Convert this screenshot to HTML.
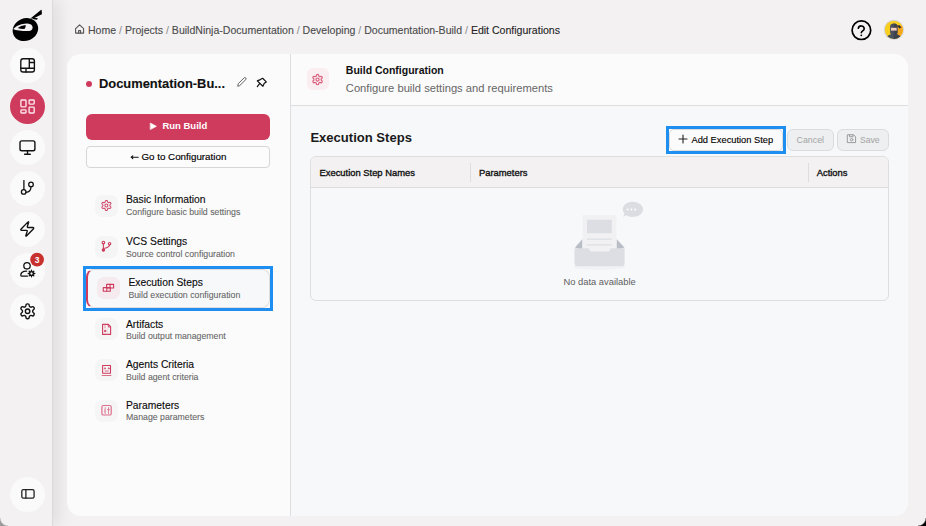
<!DOCTYPE html>
<html><head><meta charset="utf-8">
<style>
*{margin:0;padding:0;box-sizing:border-box}
html,body{width:926px;height:526px;overflow:hidden;background:#f3f1f2;font-family:"Liberation Sans",sans-serif}
.a{position:absolute;white-space:nowrap}
#side{position:absolute;left:0;top:0;width:53px;height:526px;background:#f3f1f2;border-right:1px solid #dcdadb;box-shadow:7px 0 14px rgba(0,0,0,0.075)}
.circ{position:absolute;left:10px;width:35px;height:35px;border-radius:50%;background:#fafafa}
#card{position:absolute;left:67px;top:54px;width:841px;height:462px;border-radius:14px;background:#fbfbfb;overflow:hidden}
#lp{position:absolute;left:0;top:0;width:224px;height:462px;border-right:1px solid #dedede}
#rh{position:absolute;left:224px;top:0;width:617px;height:52px;border-bottom:1px solid #dedede;background:#fbfbfb}
#rc{position:absolute;left:224px;top:52px;width:617px;height:410px;background:#f7f8fa}
.t{color:#0a0a0a;-webkit-text-stroke:0.12px #0a0a0a}
.s{color:#666;-webkit-text-stroke:0.08px #666}
.sl{color:#888;-webkit-text-stroke:0}
.ib{position:absolute;left:95px;width:23px;height:22px;border-radius:7px;background:#f5f5f6}
</style></head><body>
<div id="side">
  <div class="circ" style="top:48px"></div>
  <div class="circ" style="top:89px;background:#cf3b5d"></div>
  <div class="circ" style="top:130px"></div>
  <div class="circ" style="top:171px"></div>
  <div class="circ" style="top:212px"></div>
  <div class="circ" style="top:253px"></div>
  <div class="circ" style="top:294px"></div>
  <div class="circ" style="top:477px"></div>
</div>

<!-- breadcrumb -->
<div class="a" style="left:88px;top:25px;font-size:10.55px;line-height:10.55px;color:#4a4a4a;-webkit-text-stroke:0.1px #4a4a4a">Home<span class="sl"> / </span>Projects<span class="sl"> / </span>BuildNinja-Documentation<span class="sl"> / </span>Developing<span class="sl"> / </span>Documentation-Build<span class="sl"> / </span><span style="color:#222;-webkit-text-stroke:0.1px #222">Edit Configurations</span></div>

<div id="card">
  <div id="lp"></div>
  <div id="rh"></div>
  <div id="rc"></div>
</div>

<!-- left panel content (page coords) -->
<div class="a" style="left:86px;top:81px;width:6px;height:6px;border-radius:50%;background:#cf3b5d"></div>
<div class="a t" style="left:99px;top:78px;font-size:12.9px;line-height:12.9px;font-weight:bold;color:#111">Documentation-Bu...</div>

<div class="a" style="left:86px;top:114px;width:184px;height:26px;border-radius:6px;background:#cf3b5d"></div>
<div class="a" style="left:162.4px;top:121px;font-size:9.5px;line-height:9.5px;font-weight:bold;color:#fff">Run Build</div>

<div class="a" style="left:86px;top:146px;width:184px;height:22px;border-radius:4px;border:1px solid #d6d6d6;background:#fcfcfc"></div>
<div class="a" style="left:141.4px;top:152px;font-size:9.8px;line-height:9.8px;color:#000;-webkit-text-stroke:0.15px #000">Go to Configuration</div>

<!-- nav items -->
<div class="ib" style="top:195px"></div>
<div class="a t" style="left:126px;top:195px;font-size:10.3px;line-height:10.3px">Basic Information</div>
<div class="a s" style="left:126px;top:208px;font-size:8.76px;line-height:8.76px">Configure basic build settings</div>

<div class="ib" style="top:236px"></div>
<div class="a t" style="left:126px;top:237px;font-size:10.3px;line-height:10.3px">VCS Settings</div>
<div class="a s" style="left:126px;top:250px;font-size:8.76px;line-height:8.76px">Source control configuration</div>

<div class="a" style="left:83px;top:266px;width:190px;height:45px;border:3px solid #1e8ff0"></div>
<div class="a" style="left:86px;top:269px;width:184px;height:39px;border-radius:8px;border:1px solid #e2ddd9;border-left:2px solid #cf3b5d;background:#f7f8fa"></div>
<div class="ib" style="top:277px;left:97px;background:#f5eaed"></div>
<div class="a t" style="left:128.4px;top:278px;font-size:10.3px;line-height:10.3px">Execution Steps</div>
<div class="a s" style="left:128.4px;top:291px;font-size:8.76px;line-height:8.76px">Build execution configuration</div>

<div class="ib" style="top:318px"></div>
<div class="a t" style="left:126px;top:320px;font-size:10.3px;line-height:10.3px">Artifacts</div>
<div class="a s" style="left:126px;top:332px;font-size:8.76px;line-height:8.76px">Build output management</div>

<div class="ib" style="top:359px"></div>
<div class="a t" style="left:126px;top:360px;font-size:10.3px;line-height:10.3px">Agents Criteria</div>
<div class="a s" style="left:126px;top:373px;font-size:8.76px;line-height:8.76px">Build agent criteria</div>

<div class="ib" style="top:400px"></div>
<div class="a t" style="left:126px;top:401px;font-size:10.3px;line-height:10.3px">Parameters</div>
<div class="a s" style="left:126px;top:413px;font-size:8.76px;line-height:8.76px">Manage parameters</div>

<!-- right header -->
<div class="a" style="left:307px;top:68px;width:22px;height:22px;border-radius:6px;background:#fbeef1"></div>
<div class="a" style="left:345.8px;top:65px;font-size:10.5px;line-height:10.5px;font-weight:bold;color:#111">Build Configuration</div>
<div class="a" style="left:345.8px;top:83px;font-size:11.2px;line-height:11.2px;color:#666">Configure build settings and requirements</div>

<div class="a" style="left:310.4px;top:131px;font-size:13.05px;line-height:13.05px;font-weight:bold;color:#1a1a1a">Execution Steps</div>

<!-- buttons -->
<div class="a" style="left:666px;top:126px;width:120px;height:28px;border:3px solid #1e8ff0"></div>
<div class="a" style="left:669px;top:129px;width:114px;height:22px;border-radius:5px;border:1px solid #dcdcdc;background:#fbfbfb"></div>
<div class="a" style="left:691.5px;top:136px;font-size:9.3px;line-height:9.3px;color:#000;-webkit-text-stroke:0.12px #000">Add Execution Step</div>
<div class="a" style="left:787px;top:129px;width:46.5px;height:21.5px;border-radius:6px;border:1px solid #dcdcdc;background:#eeeff1"></div>
<div class="a" style="left:796.6px;top:136px;font-size:8.8px;line-height:8.8px;color:#a3a3a3">Cancel</div>
<div class="a" style="left:837.3px;top:129px;width:51.5px;height:21.5px;border-radius:6px;border:1px solid #dcdcdc;background:#eeeff1"></div>
<div class="a" style="left:859.9px;top:136px;font-size:8.7px;line-height:8.7px;color:#a3a3a3">Save</div>

<!-- table -->
<div class="a" style="left:310px;top:156px;width:579px;height:145px;border-radius:6px;border:1px solid #dedede;background:#f7f8fa;overflow:hidden">
  <div style="position:absolute;left:0;top:0;width:577px;height:31px;background:#f3f1f2;border-bottom:1px solid #dcdcdc"></div>
  <div style="position:absolute;left:159px;top:6px;width:1px;height:19px;background:#dedede"></div>
  <div style="position:absolute;left:497px;top:6px;width:1px;height:19px;background:#dedede"></div>
</div>
<div class="a" style="left:319.5px;top:168px;font-size:9.4px;line-height:9.4px;color:#111;-webkit-text-stroke:0.35px #111">Execution Step Names</div>
<div class="a" style="left:479px;top:168px;font-size:9.4px;line-height:9.4px;color:#111;-webkit-text-stroke:0.35px #111">Parameters</div>
<div class="a" style="left:816.7px;top:168px;font-size:9.4px;line-height:9.4px;color:#111;-webkit-text-stroke:0.35px #111">Actions</div>

<div class="a" style="left:563.4px;top:277px;font-size:9.4px;line-height:9.4px;color:#5e5e5e">No data available</div>


<svg class="a" style="left:0;top:0" width="926" height="526" viewBox="0 0 926 526" fill="none" stroke-linecap="round" stroke-linejoin="round">
 <!-- logo -->
 <g transform="translate(8,4)">
  <path d="M22.4 14.6 L32.9 5.9 Q33.6 5.6 33.7 6.4 L33.9 9.9 Q33.9 10.5 33.3 10.6 L25.4 14.6 Z" fill="#000"/>
  <path d="M24.3 13.6 L29.8 14.2 L29 15.8 L25.6 15.2 Z" fill="#000"/>
  <ellipse cx="17.4" cy="25.6" rx="13" ry="11.2" transform="rotate(-22 17.4 25.6)" fill="#000"/>
  <path d="M5.1 25.1 Q8.6 21.2 13.4 20.2 Q18 19.4 20.8 19.7 Q24.6 20.4 24.6 23.6 Q24.4 26.9 20.8 27.1 Q16 27.2 11 26.6 Q7 26.1 5.1 25.1 Z" fill="#f3f1f2"/>
  <path d="M9.7 24 Q12.6 21.6 17.7 21.1 Q17.8 23.4 16.8 24.8 Q13.4 25.2 9.7 24 Z" fill="#000"/>
 </g>
 <!-- sidebar icon 1 layout -->
 <g stroke="#111" stroke-width="1.35">
  <rect x="20.8" y="58.7" width="13.6" height="13.3" rx="2.3"/>
  <path d="M29.3 58.7V68.2M29.3 62.5H34.4M20.8 68.2H34.4M26 68.2V72"/>
 </g>
 <!-- icon 2 dashboard (white) -->
 <g stroke="#fde9ee" stroke-width="1.35">
  <rect x="20.9" y="100" width="5.1" height="6.8" rx="0.8"/>
  <rect x="29.1" y="100" width="5.1" height="4.1" rx="0.8"/>
  <rect x="29.1" y="107.1" width="5.1" height="5.9" rx="0.8"/>
  <rect x="20.9" y="109.9" width="5.1" height="3.1" rx="0.8"/>
 </g>
 <!-- monitor -->
 <g stroke="#111" stroke-width="1.4">
  <rect x="20" y="140.9" width="14.9" height="9.9" rx="1.8"/>
  <path d="M27.5 150.8V154.3M24.6 154.3H30.3"/>
 </g>
 <!-- git -->
 <g stroke="#111" stroke-width="1.3">
  <path d="M23.9 180.6V189.4"/>
  <circle cx="23.7" cy="191.9" r="2.3"/>
  <circle cx="31" cy="184.4" r="2.3"/>
  <path d="M31 186.7 Q31 192 26 192.4"/>
 </g>
 <!-- zap -->
 <g transform="translate(18.6,220.3) scale(0.72)" stroke="#111" stroke-width="1.9">
  <path d="M4 14a1 1 0 0 1-.78-1.63l9.9-10.2a.5.5 0 0 1 .86.46l-1.92 6.02A1 1 0 0 0 13 10h7a1 1 0 0 1 .78 1.63l-9.9 10.2a.5.5 0 0 1-.86-.46l1.92-6.02A1 1 0 0 0 11 14z"/>
 </g>
 <!-- user cog -->
 <g stroke="#111" stroke-width="1.3">
  <circle cx="27" cy="265.8" r="3.2"/>
  <path d="M26.6 271.2 Q23.4 271.2 21.9 272.5 Q20.8 273.5 20.8 274.9 Q20.8 276.1 22 276.1 H27.4"/>
 </g>
 <g transform="translate(31.5,273.5)" stroke="#111" stroke-width="1.3">
  <circle r="1.9"/>
  <path d="M0 -3.3V-1.9M0 1.9V3.3M-3.3 0H-1.9M1.9 0H3.3M-2.3 -2.3L-1.35 -1.35M1.35 1.35L2.3 2.3M2.3 -2.3L1.35 -1.35M-1.35 1.35L-2.3 2.3"/>
 </g>
 <circle cx="37.1" cy="259.6" r="6.9" fill="#c8302e"/>
 <text x="37.1" y="262.6" font-family="Liberation Sans" font-weight="bold" font-size="8.5" fill="#fff" text-anchor="middle">3</text>
 <!-- settings -->
 <g transform="translate(18.7,302.4) scale(0.74)" stroke="#111" stroke-width="1.9">
  <path d="M12.22 2h-.44a2 2 0 0 0-2 2v.18a2 2 0 0 1-1 1.73l-.43.25a2 2 0 0 1-2 0l-.15-.08a2 2 0 0 0-2.73.73l-.22.38a2 2 0 0 0 .73 2.730l.15.1a2 2 0 0 1 1 1.72v.51a2 2 0 0 1-1 1.74l-.15.09a2 2 0 0 0-.73 2.73l.22.38a2 2 0 0 0 2.73.73l.15-.08a2 2 0 0 1 2 0l.43.25a2 2 0 0 1 1 1.73V20a2 2 0 0 0 2 2h.44a2 2 0 0 0 2-2v-.18a2 2 0 0 1 1-1.73l.43-.25a2 2 0 0 1 2 0l.15.08a2 2 0 0 0 2.73-.73l.22-.39a2 2 0 0 0-.73-2.73l-.15-.08a2 2 0 0 1-1-1.740v-.5a2 2 0 0 1 1-1.74l.15-.09a2 2 0 0 0 .73-2.73l-.22-.38a2 2 0 0 0-2.73-.73l-.15.08a2 2 0 0 1-2 0l-.43-.25a2 2 0 0 1-1-1.73V4a2 2 0 0 0-2-2z"/>
  <circle cx="12" cy="12" r="3"/>
 </g>
 <!-- panel left -->
 <g stroke="#222" stroke-width="1.3">
  <rect x="21.8" y="489.7" width="12.3" height="8.5" rx="1.6"/>
  <path d="M25.9 489.7V498.2"/>
 </g>
 <!-- home -->
 <g stroke="#555" stroke-width="1.1">
  <path d="M75.6 28.6 L79.6 24.8 L83.6 28.6 V33.1 H75.6 Z"/>
  <path d="M78.6 33.1V30.6H80.6V33.1"/>
 </g>
 <!-- help -->
 <circle cx="861.4" cy="30.2" r="9.3" stroke="#000" stroke-width="1.7"/>
 <path d="M858.3 28.2a3 3 0 0 1 5.9.5c0 2-2.9 2.2-2.9 4" stroke="#000" stroke-width="1.6"/>
 <circle cx="861.3" cy="35.3" r="0.9" fill="#000"/>
 <!-- avatar -->
 <circle cx="893.9" cy="29.8" r="10.1" fill="#d3d4d8"/>
 <clipPath id="av"><circle cx="893.9" cy="29.8" r="9.1"/></clipPath>
 <g clip-path="url(#av)">
  <rect x="884" y="19" width="20" height="22" fill="#f8cf1e"/>
  <path d="M896 25 Q901 25 904 27 V41 H896 Z" fill="#f6a81c"/>
  <path d="M890.1 26.6 Q890.1 23.6 893.8 23.6 Q897.5 23.6 897.5 26.6 V32.4 Q897.5 33.6 896.6 34.2 Q899.6 35 900.6 37 L901.2 41 H886.4 L887 37 Q888 35 891 34.2 Q890.1 33.6 890.1 32.4 Z" fill="#4b505d"/>
  <path d="M893.8 23.6 Q897.5 23.6 897.5 26.6 V32.4 Q897.5 33.6 896.6 34.2 Q899.6 35 900.6 37 L901.2 41 H893.8 Z" fill="#3e424d"/>
  <rect x="891" y="27.8" width="5.7" height="2.8" fill="#f6cbb9"/>
  <path d="M897.2 25.4 L899.6 25.2 L901.4 27.4 L899.2 28.4 Z" fill="#2c2f37"/>
 </g>
 <!-- pencil -->
 <path d="M237.8 85.9 L238.3 83.6 L244.2 77.8 Q245 77.2 245.8 78 Q246.5 78.8 245.8 79.6 L239.9 85.4 Z" stroke="#555" stroke-width="0.9"/>
 <!-- pin -->
 <path d="M262.6 78.3 L266.3 81.9 L264.3 83.3 L262.9 86.3 L257.3 80.9 L260.3 79.6 Z" stroke="#111" stroke-width="1.2"/>
 <path d="M259.6 83.7 L257.3 86.6" stroke="#111" stroke-width="1.2"/>
 <!-- run build play -->
 <path d="M150.6 123.3 L156.3 126.3 L150.6 129.3 Z" fill="#fff" stroke="#fff" stroke-width="0.8"/>
 <!-- go to arrow -->
 <path d="M131.2 157.2 H138.2 M132.8 155.8 L131.2 157.2 L132.8 158.6" stroke="#111" stroke-width="1.1"/>
 <!-- nav icons -->
 <g transform="translate(100.4,199.4) scale(0.5)" stroke="#d04a6a" stroke-width="2.1">
  <path d="M12.22 2h-.44a2 2 0 0 0-2 2v.18a2 2 0 0 1-1 1.73l-.43.25a2 2 0 0 1-2 0l-.15-.08a2 2 0 0 0-2.73.73l-.22.38a2 2 0 0 0 .73 2.730l.15.1a2 2 0 0 1 1 1.72v.51a2 2 0 0 1-1 1.74l-.15.09a2 2 0 0 0-.73 2.73l.22.38a2 2 0 0 0 2.73.73l.15-.08a2 2 0 0 1 2 0l.43.25a2 2 0 0 1 1 1.73V20a2 2 0 0 0 2 2h.44a2 2 0 0 0 2-2v-.18a2 2 0 0 1 1-1.73l.43-.25a2 2 0 0 1 2 0l.15.08a2 2 0 0 0 2.73-.73l.22-.39a2 2 0 0 0-.73-2.73l-.15-.08a2 2 0 0 1-1-1.740v-.5a2 2 0 0 1 1-1.74l.15-.09a2 2 0 0 0 .73-2.73l-.22-.38a2 2 0 0 0-2.73-.73l-.15.08a2 2 0 0 1-2 0l-.43-.25a2 2 0 0 1-1-1.73V4a2 2 0 0 0-2-2z"/>
  <circle cx="12" cy="12" r="3"/>
 </g>
 <g stroke="#cf3b5d" stroke-width="1.1">
  <circle cx="103.4" cy="242.6" r="1.3"/>
  <path d="M103.4 243.9V249"/>
  <circle cx="103.4" cy="250" r="1.2" fill="#cf3b5d"/>
  <circle cx="109.6" cy="243.7" r="1.2"/>
  <path d="M109.6 244.9 Q109.3 247.3 104.6 248.3"/>
 </g>
 <g stroke="#cf3b5d" stroke-width="1.1">
  <rect x="106.6" y="284.4" width="7" height="3.6"/>
  <path d="M110.1 284.4V288"/>
  <rect x="103.3" y="287.6" width="7" height="3.6"/>
  <path d="M106.8 287.6V291.2"/>
 </g>
 <g stroke="#cf3b5d" stroke-width="1.1">
  <path d="M102.6 324.4H108.3L110.6 326.7V334.4H102.6Z"/>
  <path d="M108.3 324.4V327H110.6" stroke-width="0.9"/>
  <path d="M105 324.8V325.9M105 327V328" stroke-width="0.9" stroke="#e07a93"/>
  <ellipse cx="105.1" cy="331" rx="0.8" ry="1.1" fill="#cf3b5d" stroke-width="0.5"/>
  <path d="M107.3 328V334" stroke-width="0.6" stroke="#f0c4cf"/>
 </g>
 <g stroke="#cf3b5d" stroke-width="1.05">
  <rect x="102.6" y="365.4" width="7.9" height="7.8"/>
  <path d="M102.2 375.5H111" stroke-width="0.9" stroke="#d9607c"/>
  <path d="M105.1 367.8L105.8 368.9H104.4Z M109 367.8L109.7 368.9H108.3Z" stroke-width="0.5" fill="#cf3b5d"/>
  <rect x="104.6" y="370.2" width="4.2" height="1.5" rx="0.6" stroke="none" fill="#e597aa"/>
 </g>
 <g stroke="#de6f8a" stroke-width="1.2">
  <rect x="101.9" y="405.5" width="9.3" height="9.5" rx="1.6"/>
  <path d="M105.2 407.6V409.6M105.2 412.2V413.6M108.5 407.6V408.6M108.5 410.6V413.6" stroke-width="0.8"/>
  <path d="M104.4 410.1L105.8 411L104.4 411.9" stroke-width="0.9"/>
  <circle cx="108.5" cy="409.6" r="0.9" fill="#de6f8a" stroke-width="0.4"/>
 </g>
 <!-- right header gear -->
 <g transform="translate(311.3,73.3) scale(0.52)" stroke="#d9607c" stroke-width="2.3">
  <path d="M12.22 2h-.44a2 2 0 0 0-2 2v.18a2 2 0 0 1-1 1.73l-.43.25a2 2 0 0 1-2 0l-.15-.08a2 2 0 0 0-2.73.73l-.22.38a2 2 0 0 0 .73 2.730l.15.1a2 2 0 0 1 1 1.72v.51a2 2 0 0 1-1 1.74l-.15.09a2 2 0 0 0-.73 2.73l.22.38a2 2 0 0 0 2.73.73l.15-.08a2 2 0 0 1 2 0l.43.25a2 2 0 0 1 1 1.73V20a2 2 0 0 0 2 2h.44a2 2 0 0 0 2-2v-.18a2 2 0 0 1 1-1.73l.43-.25a2 2 0 0 1 2 0l.15.08a2 2 0 0 0 2.73-.73l.22-.39a2 2 0 0 0-.73-2.73l-.15-.08a2 2 0 0 1-1-1.740v-.5a2 2 0 0 1 1-1.74l.15-.09a2 2 0 0 0 .73-2.73l-.22-.38a2 2 0 0 0-2.73-.73l-.15.08a2 2 0 0 1-2 0l-.43-.25a2 2 0 0 1-1-1.73V4a2 2 0 0 0-2-2z"/>
  <circle cx="12" cy="12" r="3"/>
 </g>
 <!-- plus -->
 <path d="M683 135V143M679 139H687" stroke="#222" stroke-width="1.1"/>
 <!-- save icon -->
 <g stroke="#9a9a9a" stroke-width="1">
  <path d="M847.7 134.8H853.6L855.6 136.8V142.6H847.7Z"/>
  <path d="M849.6 134.8V136.8H853V134.8"/>
  <circle cx="851.6" cy="139.7" r="1.2"/>
 </g>
 <!-- empty illustration -->
 <ellipse cx="599.5" cy="267" rx="26" ry="3" fill="#f1f2f5"/>
 <path d="M575 247.5 L582.5 239 L582.5 250 Z" fill="#b9bdc6"/>
 <path d="M624.5 247.5 L616.5 239 L616.5 250 Z" fill="#b9bdc6"/>
 <rect x="582.5" y="215" width="34" height="38" rx="1" fill="#f1f1f3"/>
 <rect x="587" y="219.8" width="24.8" height="13.4" fill="#dcdee3"/>
 <rect x="587" y="238.6" width="24.8" height="1.2" fill="#dcdee3"/>
 <rect x="587" y="244.3" width="24.8" height="1.2" fill="#dcdee3"/>
 <path d="M574.5 248.3 H588 Q588.8 248.3 589.2 249.2 L589.8 250.6 Q590.2 251.6 591.2 251.6 H608.2 Q609.2 251.6 609.6 250.6 L610.2 249.2 Q610.6 248.3 611.4 248.3 H624.6 V263.8 Q624.6 266.2 622.4 266.2 H576.8 Q574.5 266.2 574.5 263.8 Z" fill="#dcdee3"/>
 <path d="M631.4 201.8 A10.4 7.6 0 1 1 626 215.2 L623.2 217 L624.4 213.4 A10.4 7.6 0 0 1 631.4 201.8 Z" fill="#dcdde2"/>
 <circle cx="627.6" cy="209.5" r="1" fill="#fff"/>
 <circle cx="631.4" cy="209.5" r="1" fill="#fff"/>
 <circle cx="635.2" cy="209.5" r="1" fill="#fff"/>
</svg>
<div class="a" style="left:918px;top:518px;width:8px;height:8px;background:radial-gradient(circle at 0 0,rgba(0,0,0,0) 7px,#000 8.5px)"></div>
<div class="a" style="left:0;top:518px;width:8px;height:8px;background:radial-gradient(circle at 100% 0,rgba(0,0,0,0) 7px,#9a9a9a 8.5px)"></div>
</body></html>
